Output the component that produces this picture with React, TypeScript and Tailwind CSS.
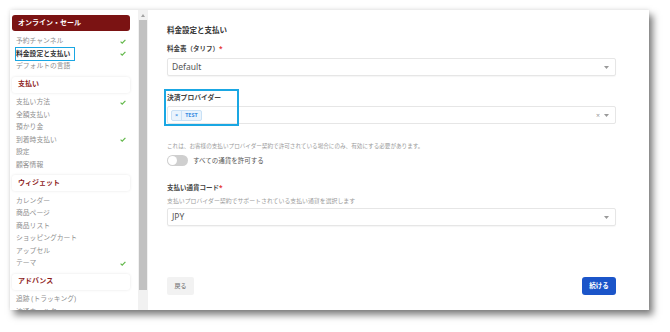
import React from 'react';

const font = "font-['Noto_Sans','Noto_Sans_CJK_JP',sans-serif]";

type NavItem = { label: string; done?: boolean; active?: boolean };

const sections: { title: string; items: NavItem[] }[] = [
  {
    title: '支払い',
    items: [
      { label: '支払い方法', done: true },
      { label: '全額支払い' },
      { label: '預かり金' },
      { label: '到着時支払い', done: true },
      { label: '設定' },
      { label: '顧客情報' },
    ],
  },
  {
    title: 'ウィジェット',
    items: [
      { label: 'カレンダー' },
      { label: '商品ページ' },
      { label: '商品リスト' },
      { label: 'ショッピングカート' },
      { label: 'アップセル' },
      { label: 'テーマ', done: true },
    ],
  },
  {
    title: 'アドバンス',
    items: [{ label: '追跡 (トラッキング)' }, { label: '流通ウィルタ' }],
  },
];

const Check = () => (
  <svg width="6" height="5" viewBox="0 0 6 5" className="shrink-0">
    <path d="M0.6 2.6 L2.2 4.1 L5.4 0.8" fill="none" stroke="#62b84a" strokeWidth="1.2" />
  </svg>
);

const Item = ({ item }: { item: NavItem }) => (
  <div className="relative flex items-center justify-between h-[12.5px] pl-[4px] pr-[4px]">
    <span className={item.active ? 'text-[6.8px] font-bold text-[#333]' : 'text-[6.8px] text-[#8f8f8f]'}>
      {item.label}
    </span>
    {item.done && <Check />}
    {item.active && (
      <span className="absolute left-[3px] top-[-0.5px] w-[60px] h-[13.5px] border-[1.5px] border-[#1aa7e3]" />
    )}
  </div>
);

const Arrow = () => (
  <svg width="5" height="3" viewBox="0 0 5 3">
    <path d="M0 0 H5 L2.5 3 Z" fill="#999" />
  </svg>
);

const Select = ({ value }: { value: string }) => (
  <div className="flex items-center justify-between h-[18px] border border-[#e6e6e6] rounded-[2px] shadow-[0_1px_1px_rgba(0,0,0,0.04)] pl-[4px] pr-[6px]">
    <span className="text-[8.5px] text-[#555]">{value}</span>
    <Arrow />
  </div>
);

export default function App() {
  return (
    <div className={`w-[670px] h-[332px] bg-white pl-[10px] pt-[10px] ${font}`}>
      <div className="flex w-[639px] h-[300px] bg-white overflow-hidden shadow-[0_-1px_4px_rgba(0,0,0,0.08),4px_5px_7px_rgba(0,0,0,0.5)]">
        {/* sidebar */}
        <div className="w-[128px] pl-[2px] pr-[8px] pt-[5px] flex flex-col">
          <div className="h-[16px] shrink-0 rounded-[3px] bg-[#7b1313] flex items-center pl-[6px] text-[7px] font-bold text-white">
            オンライン・セール
          </div>
          <div className="mt-[4px]">
            <Item item={{ label: '予約チャンネル', done: true }} />
            <Item item={{ label: '料金設定と支払い', done: true, active: true }} />
            <Item item={{ label: 'デフォルトの言語' }} />
          </div>
          {sections.map(s => (
            <div key={s.title}>
              <div className="mt-[4px] mb-[3.5px] h-[16px] rounded-[3px] bg-white shadow-[0_0_3px_rgba(0,0,0,0.1)] flex items-center pl-[6px] text-[7px] font-bold text-[#8e1b1b]">
                {s.title}
              </div>
              {s.items.map(i => (
                <Item key={i.label} item={i} />
              ))}
            </div>
          ))}
        </div>

        {/* scrollbar */}
        <div className="w-[10px] flex flex-col bg-[#f1f1f1]">
          <div className="h-[10px] flex items-center justify-center">
            <svg width="4" height="3" viewBox="0 0 4 3">
              <path d="M0 3 H4 L2 0 Z" fill="#a3a3a3" />
            </svg>
          </div>
          <div className="h-[270px] mx-[1px] bg-[#c1c1c1]" />
        </div>

        {/* main */}
        <div className="flex-1 flex flex-col pl-[19px] pr-[33px] pt-[14px] pb-[15px]">
          <div className="h-[12px] leading-[12px] text-[7.5px] font-bold text-[#333]">料金設定と支払い</div>

          <div className="mt-[8px] h-[10px] leading-[10px] text-[6.5px] font-bold text-[#444]">
            料金表（タリフ）<span className="text-[#e53935]">*</span>
          </div>
          <div className="mt-[4px]">
            <Select value="Default" />
          </div>

          <div className="relative mt-[17px]">
            <span className="absolute left-[-3px] top-[-4px] w-[75px] h-[37px] border-[2px] border-[#1aa7e3] z-10" />
            <div className="h-[10px] leading-[10px] text-[6.8px] font-bold text-[#444]">決済プロバイダー</div>
            <div className="mt-[3px] flex items-center justify-between h-[18px] border border-[#e6e6e6] rounded-[2px] pl-[3px] pr-[6px]">
              <div className="flex items-stretch h-[11px] rounded-[2px] border border-[#c9e1f6] bg-[#eaf4fd] text-[5.5px] font-bold text-[#3b8ee3]">
                <span className="flex items-center px-[3px] border-r border-[#c9e1f6]">×</span>
                <span className="flex items-center px-[3px]">TEST</span>
              </div>
              <div className="flex items-center gap-[4px]">
                <span className="text-[7px] leading-none text-[#999]">×</span>
                <Arrow />
              </div>
            </div>
          </div>

          <div className="mt-[17.5px] h-[9px] leading-[9px] text-[5.6px] text-[#9a9a9a]">
            これは、お客様の支払いプロバイダー契約で許可されている場合にのみ、有効にする必要があります。
          </div>
          <div className="mt-[4.5px] flex items-center gap-[5px] h-[11px]">
            <div className="w-[21px] h-[11px] rounded-full bg-[#cfcfcf] flex items-center pl-[1px]">
              <div className="w-[9px] h-[9px] rounded-full bg-white" />
            </div>
            <span className="text-[6.5px] text-[#555]">すべての通貨を許可する</span>
          </div>

          <div className="mt-[17px] h-[10px] leading-[10px] text-[6.5px] font-bold text-[#444]">
            支払い通貨コード<span className="text-[#e53935]">*</span>
          </div>
          <div className="mt-[4px] h-[8px] leading-[8px] text-[5.9px] text-[#9a9a9a]">
            支払いプロバイダー契約でサポートされている支払い通貨を選択します
          </div>
          <div className="mt-[3px]">
            <Select value="JPY" />
          </div>

          <div className="mt-auto flex justify-between">
            <button className="w-[27px] h-[18px] rounded-[2px] bg-[#f2f2f2] text-[6px] text-[#666]">戻る</button>
            <button className="w-[34px] h-[18px] rounded-[3px] bg-[#1b55c9] text-[6.5px] font-bold text-white">続ける</button>
          </div>
        </div>
      </div>
    </div>
  );
}
